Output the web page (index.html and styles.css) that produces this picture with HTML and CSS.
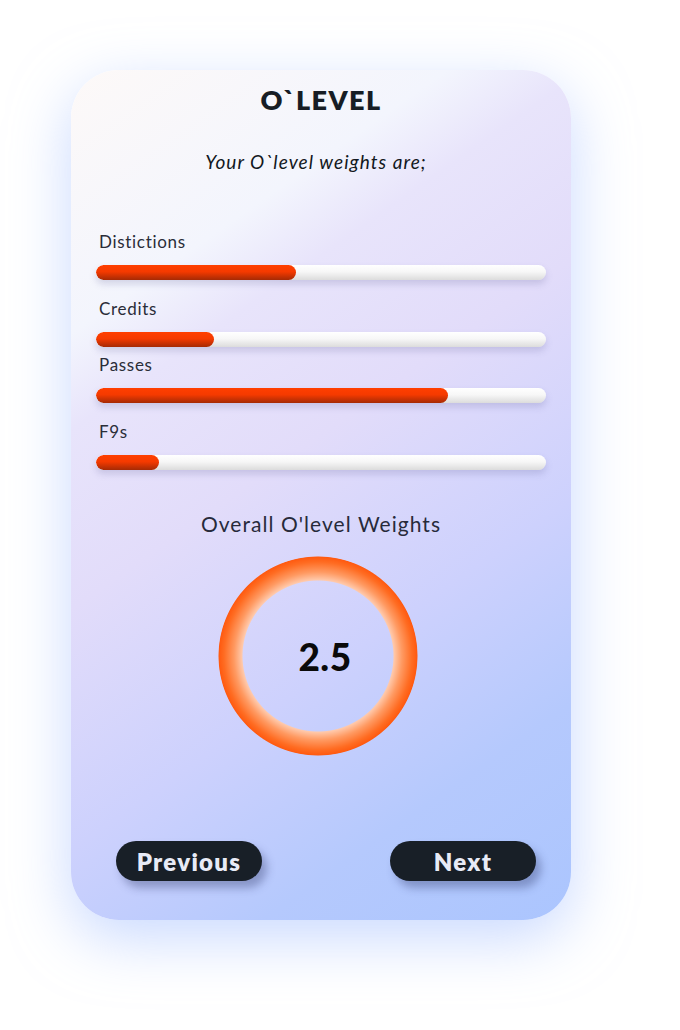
FILE: index.html
```html
<!DOCTYPE html>
<html lang="en">
<head>
<meta charset="utf-8">
<title>O`LEVEL</title>
<link rel="stylesheet" href="styles.css">
</head>
<body>
<main class="card">
  <h1 class="title">O`LEVEL</h1>
  <p class="subtitle">Your O`level weights are;</p>

  <section class="bars">
    <div class="item">
      <div class="label">Distictions</div>
      <div class="track"><div class="fill" style="width:44.4%"></div></div>
    </div>
    <div class="item">
      <div class="label">Credits</div>
      <div class="track"><div class="fill" style="width:26.2%"></div></div>
    </div>
    <div class="item item-tight">
      <div class="label">Passes</div>
      <div class="track"><div class="fill" style="width:78.2%"></div></div>
    </div>
    <div class="item">
      <div class="label">F9s</div>
      <div class="track"><div class="fill" style="width:14%"></div></div>
    </div>
  </section>

  <h2 class="overall">Overall O'level Weights</h2>
  <div class="ring"><span class="score">2.5</span></div>

  <nav class="actions">
    <button class="btn">Previous</button>
    <button class="btn">Next</button>
  </nav>
</main>
</body>
</html>
```

FILE: styles.css
```css
* { box-sizing: border-box; }

html, body {
  margin: 0;
  padding: 0;
  background: #ffffff;
}

body {
  font-family: "Lato", "Open Sans", sans-serif;
  color: #1d2129;
  width: 680px;
  height: 1030px;
  overflow: hidden;
}

.card {
  margin: 70px 0 0 71px;
  width: 500px;
  height: 850px;
  border-radius: 48px;
  background: linear-gradient(145deg,
    #fdf9f8 0%,
    #f3f5fd 22%,
    #e8e4fb 30%,
    #e2dcfa 45%,
    #cdd1fd 65%,
    #b5c9fd 82%,
    #abc5fe 100%);
  box-shadow: 0 18px 60px 0 rgba(165, 192, 255, 0.6);
  display: flex;
  flex-direction: column;
  padding: 15px 25px 0;
}

.title {
  margin: 0;
  text-align: center;
  font-size: 27px;
  line-height: 30px;
  font-weight: 800;
  letter-spacing: 1.4px;
  color: #171d24;
}

.subtitle {
  margin: 35px 0 0;
  padding-right: 10px;
  text-align: center;
  font-style: italic;
  font-size: 19px;
  line-height: 24px;
  letter-spacing: 1.05px;
  color: #121821;
}

.bars {
  margin-top: 58px;
  display: flex;
  flex-direction: column;
  gap: 19px;
}

.item {
  display: flex;
  flex-direction: column;
  gap: 13px;
}

.item-tight {
  margin-top: -11px;
}

.label {
  padding-left: 3px;
  font-size: 17px;
  line-height: 20px;
  letter-spacing: 0.7px;
  color: #2a2d38;
}

.track {
  height: 15px;
  border-radius: 8px;
  background: linear-gradient(180deg, #ffffff 0%, #f7f7f7 45%, #dcdcdc 100%);
  box-shadow: 0 4px 7px rgba(90, 90, 150, 0.22);
  overflow: hidden;
}

.fill {
  height: 100%;
  border-radius: 8px;
  background: linear-gradient(180deg, #ff3f00 0%, #f53a00 45%, #a52a05 100%);
}

.overall {
  margin: 41px 0 0;
  text-align: center;
  font-size: 21px;
  line-height: 26px;
  font-weight: 400;
  letter-spacing: 1.05px;
  color: #272a3a;
}

.ring {
  align-self: center;
  margin: 19px 0 0 -6px;
  width: 200px;
  height: 200px;
  border-radius: 50%;
  background: radial-gradient(circle closest-side,
    transparent 75px,
    #ffc9ab 76px,
    #ff9a62 84px,
    #ff6c22 94px,
    #ff5a10 99px,
    transparent 100px);
  display: flex;
  align-items: center;
  justify-content: center;
}

.score {
  margin-left: 14px;
  font-size: 37px;
  font-weight: 900;
  color: #0a0a0a;
  letter-spacing: 0.5px;
}

.actions {
  margin-top: 85px;
  display: flex;
  justify-content: space-between;
  padding: 0 10px 0 20px;
}

.btn {
  width: 146px;
  height: 40px;
  border: none;
  border-radius: 20px;
  background: #181f27;
  color: #e8ebf6;
  font-family: "Lato", "Open Sans", sans-serif;
  font-size: 24px;
  font-weight: 800;
  letter-spacing: 1.3px;
  box-shadow: 5px 7px 8px rgba(40, 50, 100, 0.35);
  padding: 0;
}
```
